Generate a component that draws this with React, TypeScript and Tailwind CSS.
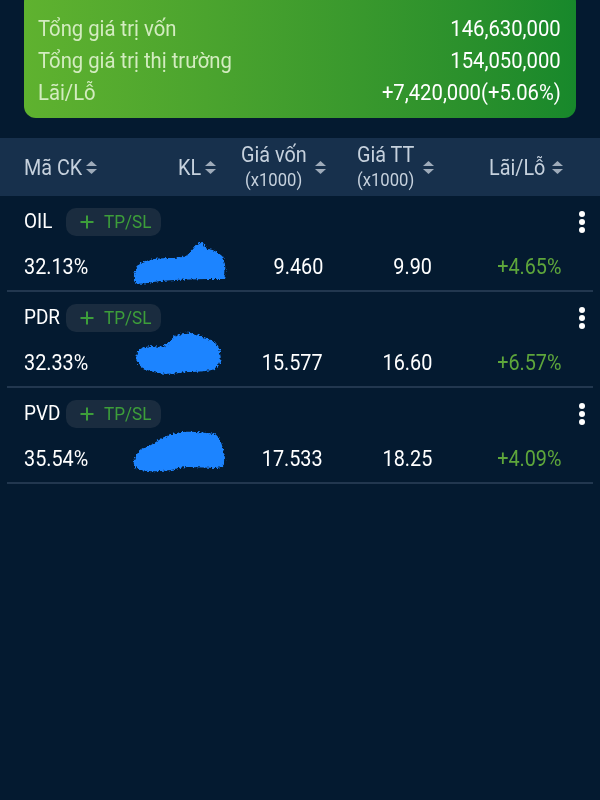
import React from "react"

type Holding = {
  code: string
  weight: string
  cost: string
  price: string
  change: string
  blob: string
  blobTop: number
}

const holdings: Holding[] = [
  {
    code: "OIL",
    weight: "32.13%",
    cost: "9.460",
    price: "9.90",
    change: "+4.65%",
    blobTop: -14,
    blob: "M3 42 C2 34 6 24 14 22 C26 18 40 20 52 18 C60 16 62 8 68 4 C72 0 74 8 76 10 C82 10 88 14 92 18 C95 26 95 34 93 40 C72 40 44 40 22 43 C12 45 5 46 3 42 Z",
  },
  {
    code: "PDR",
    weight: "32.33%",
    cost: "15.577",
    price: "16.60",
    change: "+6.57%",
    blobTop: -18,
    blob: "M6 22 C8 16 18 14 30 16 C38 14 40 6 46 4 C56 0 64 2 72 6 C80 8 86 12 88 18 C91 26 90 34 84 38 C72 42 58 40 48 42 C36 44 22 42 14 38 C6 34 4 28 6 22 Z",
  },
  {
    code: "PVD",
    weight: "35.54%",
    cost: "17.533",
    price: "18.25",
    change: "+4.09%",
    blobTop: -17,
    blob: "M3 34 C4 26 10 20 18 18 C26 14 32 8 42 6 C54 2 70 4 84 6 C90 10 92 20 94 30 C95 36 92 40 84 40 C72 40 58 38 48 40 C36 44 20 44 10 42 C4 40 2 38 3 34 Z",
  },
]

// narrow text, the app uses a condensed face
function N({ children, right }: { children: React.ReactNode; right?: boolean }) {
  return (
    <span className={right ? "inline-block origin-right scale-x-[0.9] whitespace-nowrap" : "inline-block origin-left scale-x-[0.9] whitespace-nowrap"}>
      {children}
    </span>
  )
}

function SortIcon() {
  return (
    <svg width="13" height="15" viewBox="0 0 13 15" className="shrink-0">
      <path d="M6.5 1 L12 6 H1 Z" fill="#9eabba" />
      <path d="M6.5 14 L12 9 H1 Z" fill="#9eabba" />
    </svg>
  )
}

function Kebab() {
  return (
    <div className="flex flex-col items-center gap-[2px]">
      <span className="block h-[6px] w-[6px] rounded-full bg-white" />
      <span className="block h-[6px] w-[6px] rounded-full bg-white" />
      <span className="block h-[6px] w-[6px] rounded-full bg-white" />
    </div>
  )
}

function Blob({ d, id, top }: { d: string; id: string; top: number }) {
  return (
    <svg width="98" height="48" viewBox="0 0 98 48" className="absolute left-[1px]" style={{ top }}>
      <defs>
        <filter id={id} x="-10%" y="-20%" width="120%" height="140%">
          <feTurbulence type="fractalNoise" baseFrequency="0.45" numOctaves="2" seed="3" />
          <feDisplacementMap in="SourceGraphic" scale="5" xChannelSelector="R" yChannelSelector="G" />
        </filter>
      </defs>
      <path d={d} fill="#1f84ff" filter={`url(#${id})`} />
    </svg>
  )
}

function HoldingRow({ item }: { item: Holding }) {
  return (
    <div className="mx-[7px] border-b-2 border-[#22374f] pb-[10px] pl-[17px] pr-[8px] pt-[12px]">
      <div className="flex h-[28px] items-center justify-between">
        <div className="flex items-center gap-[12px]">
          <span className="w-[30px] text-[21px] text-white">
            <N>{item.code}</N>
          </span>
          <span className="flex h-[28px] w-[95px] items-center gap-[10px] rounded-[10px] bg-[#1a2c3f] pl-[14px] text-[19px] text-[#3d9e3a]">
            <svg width="14" height="14" viewBox="0 0 14 14">
              <path d="M7 0.5 V13.5 M0.5 7 H13.5" stroke="#3d9e3a" strokeWidth="2" />
            </svg>
            <N>TP/SL</N>
          </span>
        </div>
        <Kebab />
      </div>
      <div className="mt-[14px] grid h-[28px] grid-cols-[106px_105px_88px_109px_129px] items-center text-[22px] text-white">
        <span>
          <N>{item.weight}</N>
        </span>
        <div className="relative h-[28px]">
          <Blob d={item.blob} id={`blob-${item.code}`} top={item.blobTop} />
        </div>
        <span className="text-right">
          <N right>{item.cost}</N>
        </span>
        <span className="text-right">
          <N right>{item.price}</N>
        </span>
        <span className="text-right text-[#5ea63b]">
          <N right>{item.change}</N>
        </span>
      </div>
      <div className="h-[2px]" />
    </div>
  )
}

export default function App() {
  return (
    <div
      className="h-[800px] w-[600px] overflow-hidden bg-[#041a30]"
      style={{ fontFamily: "Roboto, 'Noto Sans', sans-serif" }}
    >
      {/* summary card */}
      <div className="mx-6 -mt-[10px] rounded-xl bg-gradient-to-r from-[#5fb22f] to-[#17882b] pb-[10px] pl-[14px] pr-[15px] pt-[22px] text-[22.5px] leading-[32px]">
        <div className="flex justify-between">
          <span className="text-[#d3ecc0]">
            <N>Tổng giá trị vốn</N>
          </span>
          <span className="text-white">
            <N right>146,630,000</N>
          </span>
        </div>
        <div className="flex justify-between">
          <span className="text-[#d3ecc0]">
            <N>Tổng giá trị thị trường</N>
          </span>
          <span className="text-white">
            <N right>154,050,000</N>
          </span>
        </div>
        <div className="flex justify-between">
          <span className="text-[#d3ecc0]">
            <N>Lãi/Lỗ</N>
          </span>
          <span className="text-white">
            <N right>+7,420,000(+5.06%)</N>
          </span>
        </div>
      </div>

      {/* table header */}
      <div className="mt-5 grid h-[58px] grid-cols-[154px_64px_117px_130px_1fr] items-center bg-[#17304c] pl-6 text-[22px] text-[#c6d1dd]">
        <div className="flex items-center">
          <span className="w-[61px]"><N>Mã CK</N></span>
          <SortIcon />
        </div>
        <div className="flex items-center">
          <span className="w-[26px]"><N>KL</N></span>
          <SortIcon />
        </div>
        <div className="flex items-center gap-[2px]">
          <div className="flex w-[70px] flex-col items-center">
            <span className="h-[24px] leading-[24px]"><N>Giá vốn</N></span>
            <span className="h-[24px] text-[18.5px] leading-[26px]"><N>(x1000)</N></span>
          </div>
          <SortIcon />
        </div>
        <div className="flex items-center gap-[3px]">
          <div className="flex w-[60px] flex-col items-center">
            <span className="h-[24px] leading-[24px]"><N>Giá TT</N></span>
            <span className="h-[24px] text-[18.5px] leading-[26px]"><N>(x1000)</N></span>
          </div>
          <SortIcon />
        </div>
        <div className="flex items-center">
          <span className="w-[62px]"><N>Lãi/Lỗ</N></span>
          <SortIcon />
        </div>
      </div>

      {holdings.map((h) => (
        <HoldingRow key={h.code} item={h} />
      ))}
    </div>
  )
}
